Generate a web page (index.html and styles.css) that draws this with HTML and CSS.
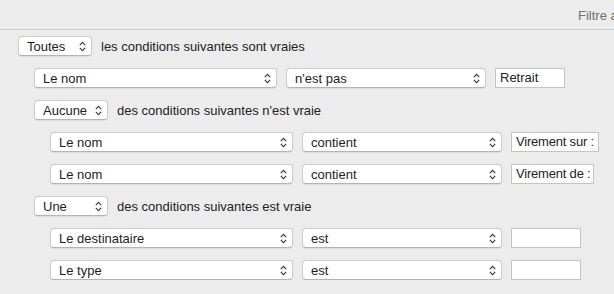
FILE: index.html
```html
<!DOCTYPE html>
<html lang="fr">
<head>
    <meta charset="UTF-8">
    <meta name="viewport" content="width=device-width, initial-scale=1.0">
    <title>Règles du filtre</title>
    <link rel="stylesheet" href="styles.css">
</head>
<body>

    <header class="toolbar">
        <span class="toolbar-title">Filtre appliqué aux opérations</span>
    </header>

    <main class="rules">
        <div class="group">
            <div class="row">
                <div class="popup quant">Toutes
                    <svg class="chev" viewBox="0 0 7 11"><path d="M0.8 4.2 L3.5 1.4 L6.2 4.2 M0.8 6.8 L3.5 9.6 L6.2 6.8"/></svg>
                </div>
                <span class="label">les conditions suivantes sont vraies</span>
            </div>

            <div class="children">
                <div class="row">
                    <div class="popup field">Le nom
                        <svg class="chev" viewBox="0 0 7 11"><path d="M0.8 4.2 L3.5 1.4 L6.2 4.2 M0.8 6.8 L3.5 9.6 L6.2 6.8"/></svg>
                    </div>
                    <div class="popup op">n'est pas
                        <svg class="chev" viewBox="0 0 7 11"><path d="M0.8 4.2 L3.5 1.4 L6.2 4.2 M0.8 6.8 L3.5 9.6 L6.2 6.8"/></svg>
                    </div>
                    <div class="textfield">Retrait</div>
                </div>

                <div class="group">
                    <div class="row">
                        <div class="popup quant">Aucune
                            <svg class="chev" viewBox="0 0 7 11"><path d="M0.8 4.2 L3.5 1.4 L6.2 4.2 M0.8 6.8 L3.5 9.6 L6.2 6.8"/></svg>
                        </div>
                        <span class="label">des conditions suivantes n'est vraie</span>
                    </div>
                    <div class="children">
                        <div class="row">
                            <div class="popup field">Le nom
                                <svg class="chev" viewBox="0 0 7 11"><path d="M0.8 4.2 L3.5 1.4 L6.2 4.2 M0.8 6.8 L3.5 9.6 L6.2 6.8"/></svg>
                            </div>
                            <div class="popup op">contient
                                <svg class="chev" viewBox="0 0 7 11"><path d="M0.8 4.2 L3.5 1.4 L6.2 4.2 M0.8 6.8 L3.5 9.6 L6.2 6.8"/></svg>
                            </div>
                            <div class="textfield wide">Virement sur :</div>
                        </div>
                        <div class="row">
                            <div class="popup field">Le nom
                                <svg class="chev" viewBox="0 0 7 11"><path d="M0.8 4.2 L3.5 1.4 L6.2 4.2 M0.8 6.8 L3.5 9.6 L6.2 6.8"/></svg>
                            </div>
                            <div class="popup op">contient
                                <svg class="chev" viewBox="0 0 7 11"><path d="M0.8 4.2 L3.5 1.4 L6.2 4.2 M0.8 6.8 L3.5 9.6 L6.2 6.8"/></svg>
                            </div>
                            <div class="textfield mid">Virement de :</div>
                        </div>
                    </div>
                </div>

                <div class="group">
                    <div class="row">
                        <div class="popup quant">Une
                            <svg class="chev" viewBox="0 0 7 11"><path d="M0.8 4.2 L3.5 1.4 L6.2 4.2 M0.8 6.8 L3.5 9.6 L6.2 6.8"/></svg>
                        </div>
                        <span class="label">des conditions suivantes est vraie</span>
                    </div>
                    <div class="children">
                        <div class="row">
                            <div class="popup field">Le destinataire
                                <svg class="chev" viewBox="0 0 7 11"><path d="M0.8 4.2 L3.5 1.4 L6.2 4.2 M0.8 6.8 L3.5 9.6 L6.2 6.8"/></svg>
                            </div>
                            <div class="popup op">est
                                <svg class="chev" viewBox="0 0 7 11"><path d="M0.8 4.2 L3.5 1.4 L6.2 4.2 M0.8 6.8 L3.5 9.6 L6.2 6.8"/></svg>
                            </div>
                            <div class="textfield"></div>
                        </div>
                        <div class="row">
                            <div class="popup field">Le type
                                <svg class="chev" viewBox="0 0 7 11"><path d="M0.8 4.2 L3.5 1.4 L6.2 4.2 M0.8 6.8 L3.5 9.6 L6.2 6.8"/></svg>
                            </div>
                            <div class="popup op">est
                                <svg class="chev" viewBox="0 0 7 11"><path d="M0.8 4.2 L3.5 1.4 L6.2 4.2 M0.8 6.8 L3.5 9.6 L6.2 6.8"/></svg>
                            </div>
                            <div class="textfield"></div>
                        </div>
                    </div>
                </div>
            </div>
        </div>
    </main>

</body>
</html>
```

FILE: styles.css
```css
/* Global Styles */
body {
    font-family: 'Liberation Sans', Arial, sans-serif;
    font-size: 13px;
    margin: 0;
    padding: 0;
    background-color: #ececec;
    color: #222;
    overflow: hidden;
}

/* Toolbar */
.toolbar {
    height: 29px;
    border-bottom: 1px solid #cbcbcb;
    display: flex;
    align-items: center;
    white-space: nowrap;
    overflow: hidden;
}

.toolbar-title {
    margin-left: 578px;
    color: #6e6e6e;
    padding-top: 1px;
}

/* Rules editor */
.rules {
    padding: 6px 0 0 18px;
}

.group, .children {
    display: flex;
    flex-direction: column;
    gap: 12px;
}

.children {
    padding-left: 16px;
}

.row {
    display: flex;
    align-items: center;
    height: 20px;
    gap: 9px;
}

.label {
    color: #222;
}

/* Popup buttons */
.popup {
    box-sizing: border-box;
    height: 20px;
    background: white;
    border: 1px solid #cdcdcd;
    border-bottom-color: #b4b4b4;
    border-radius: 4px;
    box-shadow: 0 0.5px 1px rgba(0, 0, 0, 0.08);
    display: flex;
    align-items: center;
    justify-content: space-between;
    padding: 0 5px 0 8px;
    color: #1e1e1e;
    white-space: nowrap;
}

.quant {
    width: 74px;
}

.field {
    width: 243px;
}

.op {
    width: 200px;
}

.chev {
    width: 7px;
    height: 11px;
    fill: none;
    stroke: #3a3a3a;
    stroke-width: 1.1;
}

/* Text fields */
.textfield {
    box-sizing: border-box;
    height: 20px;
    width: 70px;
    background: white;
    border: 1px solid #c4c4c4;
    padding: 0 0 0 4px;
    line-height: 18px;
    color: #1e1e1e;
    white-space: nowrap;
    overflow: hidden;
}

.textfield.wide {
    width: 88px;
    letter-spacing: -0.2px;
}

.textfield.mid {
    width: 83px;
    letter-spacing: -0.2px;
}
```
